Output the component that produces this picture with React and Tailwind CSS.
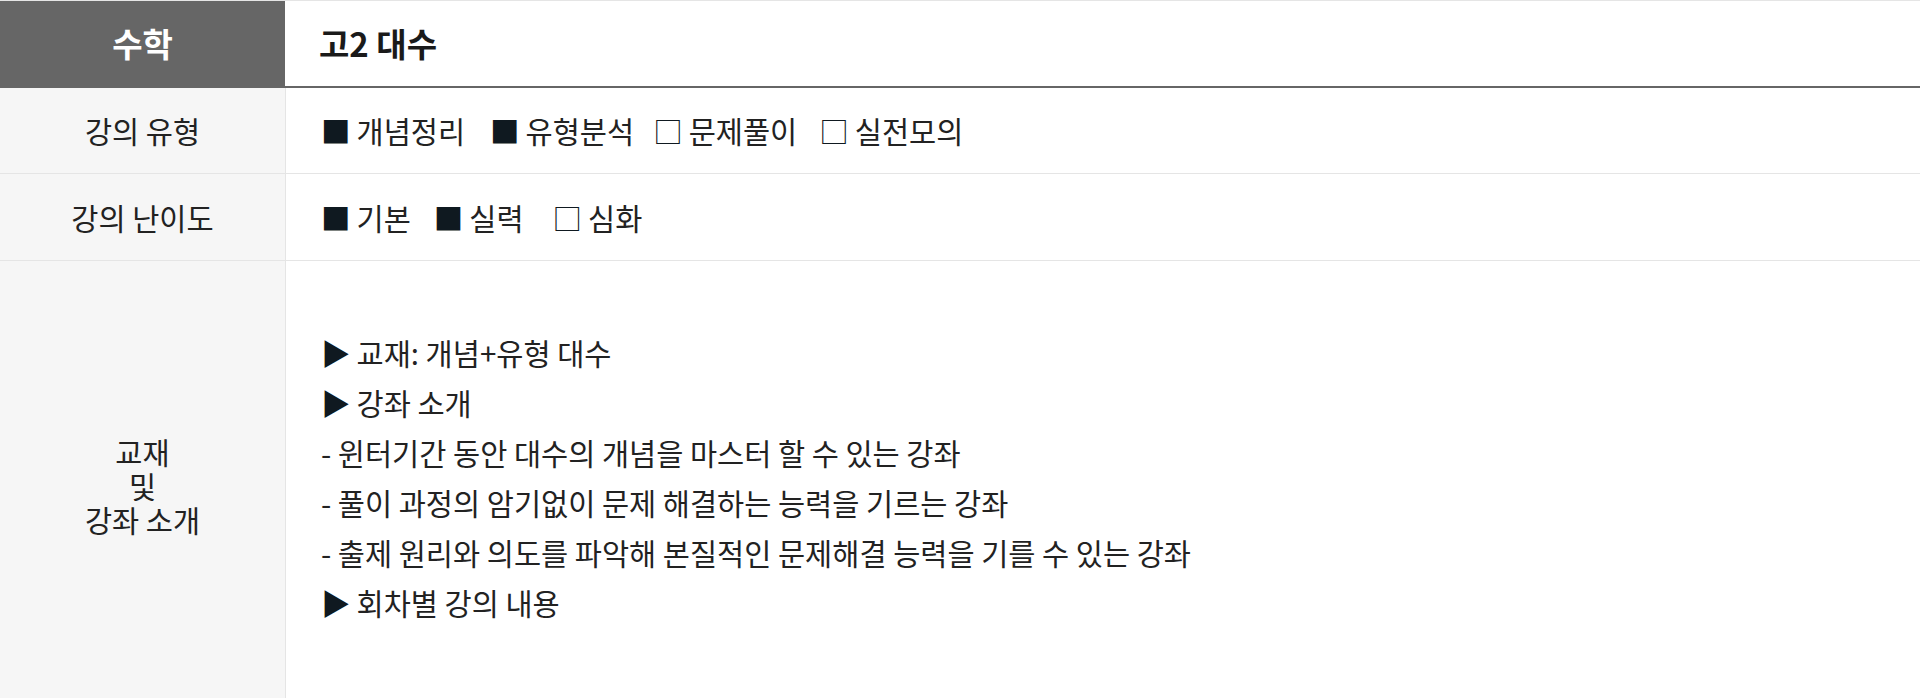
export default function App() {
  const font = "font-['Noto_Sans_CJK_KR','Noto_Sans',sans-serif]";
  const Box = ({ on }) => (
    <span className="text-[#0f1920]">{on ? "■" : "□"}</span>
  );
  const Item = ({ on, label, className = "" }) => (
    <span className={`inline-flex items-center ${className}`}>
      <Box on={on} />
      <span className="ml-[6px]">{label}</span>
    </span>
  );
  const Tri = () => <span className="text-[#0f1920] mr-[6px]">▶</span>;
  return (
    <div className={`w-[1920px] bg-white text-[#222] ${font}`}>
      <div className="flex border-t border-t-[#e5e5e5] border-b-2 border-b-[#666]">
        <div className="w-[285px] h-[85px] bg-[#666] text-white flex items-center justify-center text-[33px] font-bold">
          수학
        </div>
        <div className="flex-1 flex items-center pl-[34px] text-[33px] font-bold text-[#1a1a1a]">
          고2 대수
        </div>
      </div>

      <div className="flex border-b border-b-[#e5e5e5] text-[29.5px]">
        <div className="w-[286px] h-[85px] bg-[#f6f6f6] border-r border-r-[#e5e5e5] flex items-center justify-center">
          강의 유형
        </div>
        <div className="flex-1 flex items-center pl-[35px]">
          <Item on label="개념정리" />
          <Item on label="유형분석" className="ml-[25px]" />
          <Item label="문제풀이" className="ml-[19px]" />
          <Item label="실전모의" className="ml-[22px]" />
        </div>
      </div>

      <div className="flex border-b border-b-[#e5e5e5] text-[29.5px]">
        <div className="w-[286px] h-[86px] bg-[#f6f6f6] border-r border-r-[#e5e5e5] flex items-center justify-center">
          강의 난이도
        </div>
        <div className="flex-1 flex items-center pl-[35px]">
          <Item on label="기본" />
          <Item on label="실력" className="ml-[23px]" />
          <Item label="심화" className="ml-[29px]" />
        </div>
      </div>

      <div className="flex text-[29.5px]">
        <div className="w-[286px] bg-[#f6f6f6] border-r border-r-[#e5e5e5] flex items-center justify-center">
          <div className="text-center leading-[34px]">
            <div>교재</div>
            <div>및</div>
            <div>강좌 소개</div>
          </div>
        </div>
        <div className="flex-1 pl-[35px] pt-[66px] pb-[82px] leading-[50px]">
          <div>
            <Tri />교재: 개념+유형 대수
          </div>
          <div>
            <Tri />강좌 소개
          </div>
          <div>- 윈터기간 동안 대수의 개념을 마스터 할 수 있는 강좌</div>
          <div>- 풀이 과정의 암기없이 문제 해결하는 능력을 기르는 강좌</div>
          <div>- 출제 원리와 의도를 파악해 본질적인 문제해결 능력을 기를 수 있는 강좌</div>
          <div>
            <Tri />회차별 강의 내용
          </div>
        </div>
      </div>
    </div>
  );
}
